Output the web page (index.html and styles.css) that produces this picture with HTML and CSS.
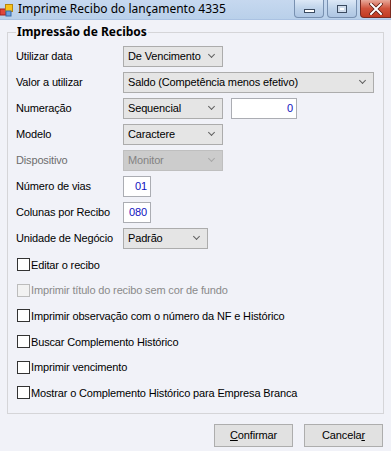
FILE: index.html
```html
<!DOCTYPE html>
<html lang="pt-BR">
<head>
    <meta charset="UTF-8">
    <title>Imprime Recibo do lançamento 4335</title>
    <link rel="stylesheet" href="styles.css">
</head>
<body>
    <div class="window">
        <div class="titlebar">
            <svg class="app-icon" width="14" height="14" viewBox="0 0 14 14">
                <rect x="0" y="6" width="6" height="6" fill="#e0463a" stroke="#a02020"/>
                <rect x="5.5" y="1.5" width="7" height="7" fill="#f7c21a" stroke="#b5860b"/>
                <rect x="6" y="8" width="5" height="5" fill="#6aa0e0" stroke="#3468a8"/>
            </svg>
            <span class="title">Imprime Recibo do lançamento 4335</span>
            <div class="ctrls">
                <div class="cbtn"><span class="ico-min"></span></div>
                <div class="cbtn"><span class="ico-max"></span></div>
                <div class="cbtn close">
                    <svg width="14" height="12" viewBox="0 0 14 12">
                        <path d="M2 1 L12 11 M12 1 L2 11" stroke="#5a1a10" stroke-width="3.6" stroke-linecap="square"/>
                        <path d="M2 1 L12 11 M12 1 L2 11" stroke="#fff" stroke-width="2" stroke-linecap="square"/>
                    </svg>
                </div>
            </div>
        </div>

        <div class="content">
            <fieldset class="group">
                <legend>Impressão de Recibos</legend>

                <div class="row">
                    <label>Utilizar data</label>
                    <div class="combo w100">De Vencimento<span class="arrow"></span></div>
                </div>
                <div class="row">
                    <label>Valor a utilizar</label>
                    <div class="combo w251">Saldo (Competência menos efetivo)<span class="arrow"></span></div>
                </div>
                <div class="row">
                    <label>Numeração</label>
                    <div class="combo w100">Sequencial<span class="arrow"></span></div>
                    <div class="textbox w66">0</div>
                </div>
                <div class="row">
                    <label>Modelo</label>
                    <div class="combo w100">Caractere<span class="arrow"></span></div>
                </div>
                <div class="row disabled">
                    <label>Dispositivo</label>
                    <div class="combo w100">Monitor<span class="arrow"></span></div>
                </div>
                <div class="row">
                    <label>Número de vias</label>
                    <div class="textbox w28">01</div>
                </div>
                <div class="row">
                    <label>Colunas por Recibo</label>
                    <div class="textbox w28">080</div>
                </div>
                <div class="row">
                    <label>Unidade de Negócio</label>
                    <div class="combo w85">Padrão<span class="arrow"></span></div>
                </div>

                <div class="checks">
                    <div class="check"><span class="box"></span>Editar o recibo</div>
                    <div class="check disabled"><span class="box"></span>Imprimir título do recibo sem cor de fundo</div>
                    <div class="check"><span class="box"></span>Imprimir observação com o número da NF e Histórico</div>
                    <div class="check"><span class="box"></span>Buscar Complemento Histórico</div>
                    <div class="check"><span class="box"></span>Imprimir vencimento</div>
                    <div class="check"><span class="box"></span>Mostrar o Complemento Histórico para Empresa Branca</div>
                </div>
            </fieldset>

            <div class="buttons">
                <div class="btn"><u>C</u>onfirmar</div>
                <div class="btn">Cancela<u>r</u></div>
            </div>
        </div>
    </div>
</body>
</html>
```
FILE: styles.css
```css
* {
    box-sizing: border-box;
}
body {
    margin: 0;
    font-family: "Liberation Sans", Arial, sans-serif;
    font-size: 11px;
    letter-spacing: -0.15px;
    color: #000;
    background: #f1f2f8;
}
.window {
    width: 391px;
    height: 451px;
    overflow: hidden;
}

/* barra de titulo */
.titlebar {
    height: 20px;
    display: flex;
    align-items: center;
    background: linear-gradient(#c6d8ef, #b9d0ea);
    border-bottom: 1px solid #aac2e2;
}
.app-icon {
    margin: 0 4px 0 0;
}
.title {
    flex: 1;
    font-family: "Noto Sans", sans-serif;
    font-size: 12px;
    letter-spacing: 0;
    line-height: 18px;
    margin-top: -2px;
}
.ctrls {
    display: flex;
    align-self: flex-start;
    gap: 3px;
}
.cbtn {
    width: 30px;
    height: 18px;
    border: 1px solid #7890b0;
    border-top: none;
    border-radius: 0 0 4px 4px;
    background: linear-gradient(#dce8f6, #bfd3ea 50%, #aec6e3);
    display: flex;
    align-items: center;
    justify-content: center;
}
.cbtn.close {
    width: 31px;
    border-color: #7a2a20;
    border-radius: 0 0 0 4px;
    background: linear-gradient(#e8a99a, #d0533c 50%, #c23b22);
}
.ico-min {
    width: 11px;
    height: 4px;
    margin-top: 5px;
    background: #fff;
    border: 1px solid #3a4a60;
}
.ico-max {
    width: 10px;
    height: 8px;
    border: 1px solid #3a4a60;
    background: #fff;
    box-shadow: inset 0 0 0 2px #cfdcec;
}

/* conteudo */
.content {
    padding: 5px 7px 0 7px;
}
.group {
    margin: 0;
    padding: 4px 8px 0 8px;
    height: 389px;
    border: 1px solid #d5d5d8;
}
.group legend {
    font-family: "Noto Sans", sans-serif;
    font-size: 12px;
    letter-spacing: 0;
    font-weight: bold;
    padding: 0 1px;
    margin-left: 0;
    line-height: 14px;
}
.row {
    display: flex;
    align-items: center;
    height: 26px;
}
.row label {
    width: 107px;
    white-space: nowrap;
}
.row.disabled label {
    color: #6d6d6d;
}
.combo {
    position: relative;
    height: 21px;
    line-height: 19px;
    padding-left: 4px;
    border: 1px solid #acacac;
    background: #e5e5e5;
    white-space: nowrap;
}
.row.disabled .combo {
    background: #cccccc;
    border-color: #bfbfbf;
    color: #838383;
}
.arrow {
    position: absolute;
    right: 8px;
    top: 5px;
    width: 5px;
    height: 5px;
    border-right: 1px solid #606060;
    border-bottom: 1px solid #606060;
    transform: rotate(45deg);
}
.row.disabled .arrow {
    border-color: #a8a8a8;
}
.w100 { width: 100px; }
.w251 { width: 251px; }
.w85 { width: 85px; }
.w66 { width: 66px; margin-left: 8px; }
.w28 { width: 28px; }
.textbox {
    height: 21px;
    line-height: 19px;
    padding-right: 3px;
    text-align: right;
    border: 1px solid #abadb3;
    background: #fff;
    color: #1010c0;
}

/* caixas de selecao */
.checks {
    margin-top: 1px;
}
.check {
    display: flex;
    align-items: center;
    height: 25.6px;
}
.check .box {
    width: 13px;
    height: 13px;
    margin: 0 1px 0 1px;
    border: 1px solid #333;
    background: #fff;
}
.check.disabled {
    color: #8a8a8a;
}
.check.disabled .box {
    border-color: #bcbcbc;
    background: #f2f2f2;
}

/* botoes */
.buttons {
    display: flex;
    justify-content: flex-end;
    gap: 11px;
    padding-top: 10px;
    padding-right: 1px;
}
.btn {
    width: 79px;
    height: 23px;
    line-height: 21px;
    text-align: center;
    border: 1px solid #adadad;
    background: #e1e1e1;
}
```
